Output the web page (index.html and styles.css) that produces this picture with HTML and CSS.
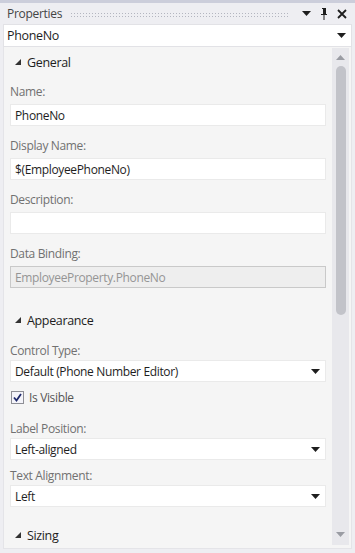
FILE: index.html
```html
<!DOCTYPE html>
<html lang="en">
<head>
  <meta charset="UTF-8" />
  <title>Properties</title>
  <link rel="stylesheet" href="styles.css">
</head>
<body>
  <div class="window">
    <div class="titlebar">
      <span class="title">Properties</span>
      <span class="grip"></span>
      <span class="tb-icon">
        <svg width="9" height="5" viewBox="0 0 9 5"><path d="M0 0h9L4.5 5z" fill="#1e1e1e"/></svg>
      </span>
      <span class="tb-icon">
        <svg width="8" height="12" viewBox="0 0 8 12"><path d="M2 0h4v1H5v5h2v1H4.5v5h-1V7H1V6h2V1H2z M5 1h1v5H5z" fill="#1e1e1e"/></svg>
      </span>
      <span class="tb-icon">
        <svg width="10" height="10" viewBox="0 0 10 10"><path d="M1 1l8 8M9 1l-8 8" stroke="#1e1e1e" stroke-width="1.8"/></svg>
      </span>
    </div>

    <div class="objsel">
      <span>PhoneNo</span>
      <svg width="9" height="5" viewBox="0 0 9 5"><path d="M0 0h9L4.5 5z" fill="#1e1e1e"/></svg>
    </div>

    <div class="content">
      <div class="props">
        <div class="section">
          <svg width="6" height="6" viewBox="0 0 6 6"><path d="M6 0v6H0z" fill="#333"/></svg>
          General
        </div>

        <div class="field">
          <label>Name:</label>
          <div class="input">PhoneNo</div>
        </div>
        <div class="field">
          <label>Display Name:</label>
          <div class="input">$(EmployeePhoneNo)</div>
        </div>
        <div class="field">
          <label>Description:</label>
          <div class="input"></div>
        </div>
        <div class="field">
          <label>Data Binding:</label>
          <div class="input disabled">EmployeeProperty.PhoneNo</div>
        </div>

        <div class="section sep">
          <svg width="6" height="6" viewBox="0 0 6 6"><path d="M6 0v6H0z" fill="#333"/></svg>
          Appearance
        </div>

        <div class="field tight">
          <label>Control Type:</label>
          <div class="input select">Default (Phone Number Editor)
            <svg width="9" height="5" viewBox="0 0 9 5"><path d="M0 0h9L4.5 5z" fill="#1e1e1e"/></svg>
          </div>
        </div>
        <div class="check">
          <span class="box">
            <svg width="9" height="9" viewBox="0 0 9 9"><path d="M1 4.5l2.5 3L8 1" stroke="#1f2a6b" stroke-width="1.8" fill="none"/></svg>
          </span>
          Is Visible
        </div>
        <div class="field tight">
          <label>Label Position:</label>
          <div class="input select">Left-aligned
            <svg width="9" height="5" viewBox="0 0 9 5"><path d="M0 0h9L4.5 5z" fill="#1e1e1e"/></svg>
          </div>
        </div>
        <div class="field tight">
          <label>Text Alignment:</label>
          <div class="input select">Left
            <svg width="9" height="5" viewBox="0 0 9 5"><path d="M0 0h9L4.5 5z" fill="#1e1e1e"/></svg>
          </div>
        </div>

        <div class="section sep last">
          <svg width="6" height="6" viewBox="0 0 6 6"><path d="M6 0v6H0z" fill="#333"/></svg>
          Sizing
        </div>
      </div>

      <div class="scrollbar">
        <svg width="9" height="5" viewBox="0 0 9 5"><path d="M0 5h9L4.5 0z" fill="#9a9ca3"/></svg>
        <div class="track"><div class="thumb"></div></div>
        <svg width="9" height="5" viewBox="0 0 9 5"><path d="M0 0h9L4.5 5z" fill="#9a9ca3"/></svg>
      </div>
    </div>
  </div>
</body>
</html>
```

FILE: styles.css
```css
* {
  margin: 0;
  padding: 0;
  box-sizing: border-box;
}

body {
  font-family: 'Open Sans', 'Noto Sans', sans-serif;
  font-size: 12px;
  color: #1e1e1e;
  background: #eeeef2;
  width: 355px;
  height: 553px;
  overflow: hidden;
}

.window {
  height: 553px;
  display: flex;
  flex-direction: column;
  border-top: 3px solid #cccedb;
  padding: 0 3px 4px 3px;
}

.titlebar {
  height: 21px;
  display: flex;
  align-items: center;
  padding: 0 4px;
  gap: 6px;
}

.title {
  color: #444;
  letter-spacing: -0.3px;
}

.grip {
  flex: 1;
  height: 5px;
  margin: 1px 4px 0 2px;
  background-image: radial-gradient(#b4b6c0 0.6px, transparent 0.8px);
  background-size: 3px 3px;
}

.tb-icon {
  width: 12px;
  display: flex;
  justify-content: center;
  align-items: center;
}

.objsel {
  height: 23px;
  background: #fff;
  border: 1px solid #e2e2e6;
  display: flex;
  align-items: center;
  justify-content: space-between;
  padding: 0 5px 0 3px;
  font-size: 12.5px;
  letter-spacing: -0.35px;
}

.content {
  flex: 1;
  display: flex;
  background: #f5f5f5;
  border: 1px solid #e4e4e8;
  border-top: none;
  min-height: 0;
}

.props {
  flex: 1;
  padding: 6px 6px 0 6px;
  overflow: hidden;
}

.section {
  display: flex;
  align-items: center;
  gap: 6px;
  height: 18px;
  padding-left: 5px;
  font-size: 12.5px;
  letter-spacing: -0.35px;
  margin-bottom: 12px;
}

.section.sep {
  margin-top: 23px;
  margin-bottom: 13px;
}

.section.last {
  margin-top: 19px;
}

.field {
  margin-bottom: 11px;
}

.field.tight {
  margin-bottom: 7px;
}

.field label {
  display: block;
  color: #717171;
  letter-spacing: -0.35px;
  height: 17px;
  margin-bottom: 4px;
}

.field.tight label {
  margin-bottom: 1px;
}

.input {
  height: 22px;
  background: #fff;
  border: 1px solid #eaeaea;
  display: flex;
  align-items: center;
  padding: 0 4px;
  letter-spacing: -0.35px;
}

.input.disabled {
  background: #eeeeee;
  border-color: #c9c9c9;
  color: #959595;
}

.input.select {
  justify-content: space-between;
  padding-right: 5px;
}

.check {
  display: flex;
  align-items: center;
  gap: 5px;
  height: 20px;
  margin: -2px 0 13px 1px;
  color: #555;
  letter-spacing: -0.35px;
}

.check .box {
  width: 13px;
  height: 13px;
  border: 1px solid #8e8f96;
  background: #f4f4fa;
  display: flex;
  align-items: center;
  justify-content: center;
}

.scrollbar {
  width: 17px;
  background: #e8e8ec;
  display: flex;
  flex-direction: column;
  align-items: center;
  padding: 7px 0 8px 0;
  margin: 1px 2px 3px 0;
}

.track {
  flex: 1;
  width: 100%;
  padding: 6px 3px 6px 4px;
}

.thumb {
  height: 249px;
  background: #c2c3c9;
  border-radius: 5px;
}
```
